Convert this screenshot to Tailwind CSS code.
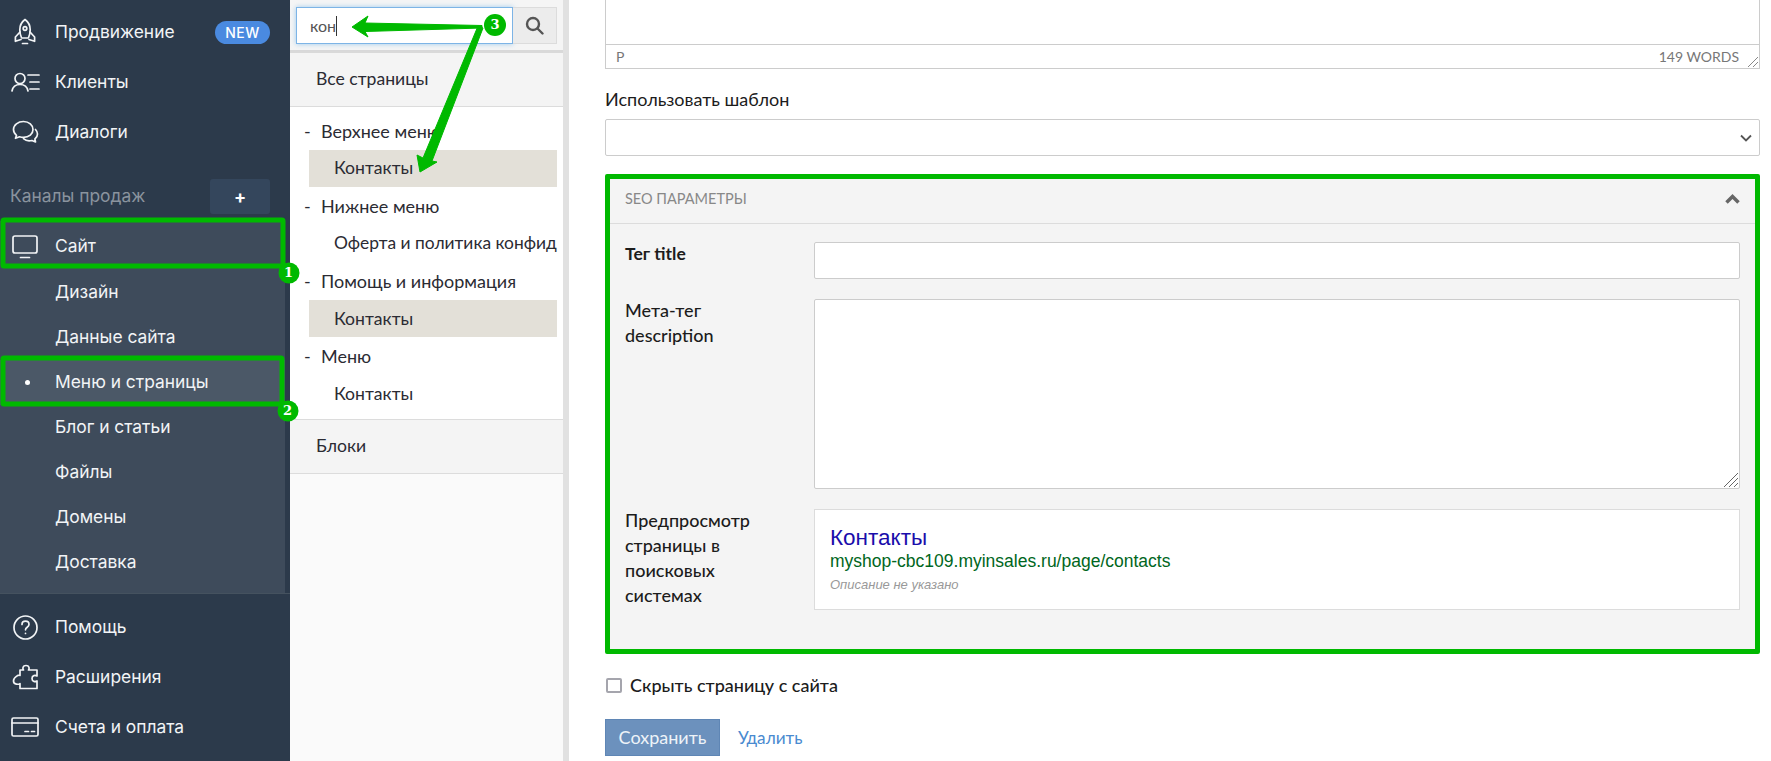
<!DOCTYPE html>
<html>

<head>
    <title>Меню и страницы</title>
    <script src="https://cdn.jsdelivr.net/npm/@tailwindcss/browser@4"></script>
</head>

<body class="bg-white overflow-hidden">
    <div class="relative flex w-[1771px] h-[761px] overflow-hidden">

        <!-- main sidebar -->
        <aside class="w-[290px] h-full shrink-0 flex flex-col bg-[#2c3a4b] text-[#f2f4f6] text-[17.400px] [font-family:Inter,sans-serif]">
            <div class="pt-[7px]">
                <a class="h-[50px] flex items-center">
                    <span class="w-[55px] flex justify-center pr-[5px]">
                        <svg class="w-[26px] h-[28px]" viewBox="0 0 26 28" fill="none" stroke="currentColor" stroke-width="1.7" stroke-linejoin="round" stroke-linecap="round">
                            <path d="M13 1.500c3.600 2.600 5.200 6.400 5.200 10.300 0 3-.8 6-1.800 8.200H9.600c-1-2.200-1.800-5.200-1.800-8.200 0-3.900 1.600-7.700 5.200-10.300z" />
                            <circle cx="13" cy="10.500" r="1.800" />
                            <path d="M8 14l-4.600 5v4.300l5.600-1.800M18 14l4.600 5v4.300l-5.600-1.800M10.500 25.500h5" />
                        </svg>
                    </span>
                    <span>Продвижение</span>
                    <span class="ml-auto mr-[20px] w-[55px] h-[23px] rounded-full bg-[#4a8ae0] text-white text-[14px] font-medium tracking-[0.5px] flex items-center justify-center">NEW</span>
                </a>
                <a class="h-[50px] flex items-center">
                    <span class="w-[55px] flex justify-center pr-[4px]">
                        <svg class="w-[30px] h-[20px]" viewBox="0 0 30 20" fill="none" stroke="currentColor" stroke-width="1.7" stroke-linecap="round">
                            <circle cx="9" cy="6.500" r="5" />
                            <path d="M1 19c.7-4 3.800-6.500 8-6.500s7.300 2.500 8 6.500M17 3h11M19 10h9M19 17h9" />
                        </svg>
                    </span>
                    <span>Клиенты</span>
                </a>
                <a class="h-[50px] flex items-center">
                    <span class="w-[55px] flex justify-center pr-[4px]">
                        <svg class="w-[27px] h-[25px]" viewBox="0 0 27 25" fill="none" stroke="currentColor" stroke-width="1.7" stroke-linejoin="round" stroke-linecap="round">
                            <path d="M11.500 1.500C6 1.500 1.500 5 1.500 9.500c0 2.300 1.100 4.300 3 5.800l-1 3 4-1.500c1.200.4 2.600.6 4 .6 5.500 0 9.500-3.400 9.500-7.900s-4-8-9.500-8z" />
                            <path d="M23.500 9.500c1.300 1.300 2 2.900 2 4.600 0 2-1 3.700-2.600 4.900l.6 3-3.500-1.500c-3 .8-6.300.2-8.500-1.800" />
                        </svg>
                    </span>
                    <span>Диалоги</span>
                </a>
            </div>

            <div class="h-[64px] pt-[15px] pl-[10px] pr-[20px] flex items-center justify-between text-[#8a939e]">
                <span>Каналы продаж</span>
                <span class="w-[60px] h-[35px] rounded-[3px] bg-[#34465c] text-white text-[18px] font-bold flex items-center justify-center">+</span>
            </div>

            <div class="h-[372px] mr-[5px] bg-[#3e4b5b] flex flex-col">
                <a class="h-[49px] pt-[2px] flex items-center">
                    <span class="w-[55px] flex justify-center pr-[5px]">
                        <svg class="w-[26px] h-[24px]" viewBox="0 0 26 24" fill="none" stroke="currentColor" stroke-width="1.700" stroke-linecap="round">
                            <rect x="1" y="1" width="24" height="17" rx="2" />
                            <path d="M8.500 22.500h9" />
                        </svg>
                    </span>
                    <span>Сайт</span>
                </a>
                <a class="h-[45px] pl-[55px] flex items-center">Дизайн</a>
                <a class="h-[45px] pl-[55px] flex items-center">Данные сайта</a>
                <a class="relative h-[45px] pl-[55px] flex items-center bg-[#4b5867]">
                    <span class="absolute left-[25px] top-[20px] w-[5px] h-[5px] rounded-full bg-white"></span>
                    Меню и страницы
                </a>
                <a class="h-[45px] pl-[55px] flex items-center">Блог и статьи</a>
                <a class="h-[45px] pl-[55px] flex items-center">Файлы</a>
                <a class="h-[45px] pl-[55px] flex items-center">Домены</a>
                <a class="h-[45px] pl-[55px] flex items-center">Доставка</a>
            </div>

            <div class="border-t border-[#45525f] pt-[8px]">
                <a class="h-[50px] flex items-center">
                    <span class="w-[55px] flex justify-center pr-[5px]">
                        <svg class="w-[25px] h-[25px]" viewBox="0 0 25 25" fill="none" stroke="currentColor" stroke-width="1.700" stroke-linecap="round" stroke-linejoin="round">
                            <circle cx="12.500" cy="12.500" r="11.500" />
                            <path d="M9 9.500c0-2 1.600-3.300 3.500-3.300s3.500 1.300 3.500 3.200c0 2.800-3.500 2.800-3.500 5.400" />
                            <path d="M12.500 18.300v.2" />
                        </svg>
                    </span>
                    <span>Помощь</span>
                </a>
                <a class="h-[50px] flex items-center">
                    <span class="w-[55px] flex justify-center pr-[5px]">
                        <svg class="w-[27px] h-[26px]" viewBox="0 0 27 26" fill="none" stroke="currentColor" stroke-width="1.700" stroke-linejoin="round">
                            <path d="M8 6h3.500c-1-1.200-1-4.500 2.500-4.500s3.500 3.300 2.500 4.500H25v6c-1.600-1-5-1-5 2.500s3.400 3.500 5 2.500v7.500H8v-5c-1 1-6.500 1.500-6.500-2.500S7 10.500 8 11.500V6z" />
                        </svg>
                    </span>
                    <span>Расширения</span>
                </a>
                <a class="h-[50px] flex items-center">
                    <span class="w-[55px] flex justify-center pr-[5px]">
                        <svg class="w-[28px] h-[20px]" viewBox="0 0 28 20" fill="none" stroke="currentColor" stroke-width="1.700" stroke-linecap="round">
                            <rect x="1" y="1" width="26" height="18" rx="1.500" />
                            <path d="M1 6h26M14 14.500h3.500M20.500 14.500h3" />
                        </svg>
                    </span>
                    <span>Счета и оплата</span>
                </a>
            </div>
        </aside>

        <!-- pages tree -->
        <section class="w-[273px] h-full shrink-0 bg-[#fafafa] text-[#2b2b33] text-[17.600px] [font-family:Lato,sans-serif]">
            <div class="h-[53px] bg-[#f5f5f5] border-b-[3px] border-[#d9d9d9] flex items-start pt-[7px] pl-[6px] pr-[6px]">
                <div class="w-[217px] h-[37px] bg-white border border-[#7db4e6] shadow-[0_0_5px_rgba(102,175,233,0.6)] pl-[13px] flex items-center text-[16px] text-[#555]">
                    кон<span class="w-px h-[20px] bg-[#333]"></span>
                </div>
                <div class="flex-1 h-[37px] bg-[#ececec] border border-l-0 border-[#dcdcdc] flex items-center justify-center">
                    <svg class="w-[19px] h-[19px]" viewBox="0 0 19 19" fill="none" stroke="#555" stroke-width="2.400" stroke-linecap="round">
                        <circle cx="8" cy="8" r="6" />
                        <path d="M12.500 12.500l5 5" />
                    </svg>
                </div>
            </div>
            <div class="h-[54px] bg-[#f4f4f4] border-b border-[#dcdcdc] pl-[26px] flex items-center">Все страницы</div>
            <div class="bg-white h-[312px] pt-[5px] pl-[14px] pr-[6px] overflow-hidden">
                <div class="h-[38px] text-[18px] flex items-center"><span class="w-[17px]">-</span>Верхнее меню</div>
                <div class="h-[37px] ml-[5px] bg-[#e3e0d8] pl-[25px] flex items-center">Контакты</div>
                <div class="h-[38px] text-[18px] flex items-center"><span class="w-[17px]">-</span>Нижнее меню</div>
                <div class="h-[37px] ml-[5px] pl-[25px] text-[17.400px] flex items-center whitespace-nowrap">Оферта и политика конфид</div>
                <div class="h-[38px] text-[18px] flex items-center"><span class="w-[17px]">-</span>Помощь и информация</div>
                <div class="h-[37px] ml-[5px] bg-[#e3e0d8] pl-[25px] pt-[2px] flex items-center">Контакты</div>
                <div class="h-[38px] text-[18px] flex items-center"><span class="w-[17px]">-</span>Меню</div>
                <div class="h-[37px] ml-[5px] pl-[25px] pt-[2px] flex items-center">Контакты</div>
            </div>
            <div class="h-[55px] bg-[#f4f4f4] border-y border-[#dcdcdc] pl-[26px] flex items-center">Блоки</div>
        </section>

        <!-- scrollbar -->
        <div class="w-[6px] h-full shrink-0 bg-[#e1e1e1]"></div>

        <!-- page form -->
        <main class="flex-1 pl-[36px] pr-[11px] text-[18px] text-[#1c1c1c] [font-family:Lato,sans-serif]">
            <div class="h-[69px] border-x border-b border-[#cccccc] flex flex-col">
                <div class="flex-1"></div>
                <div class="relative h-[24px] border-t border-[#cccccc] pl-[10px] pr-[20px] flex items-center justify-between text-[14px] text-[#777]">
                    <span>P</span>
                    <span>149 WORDS</span>
                    <svg class="absolute right-0 bottom-0 w-[12px] h-[12px]" viewBox="0 0 12 12" fill="none" stroke="#888" stroke-width="1">
                        <path d="M1 11L11 1M6 11l5-5" />
                    </svg>
                </div>
            </div>

            <label class="block mt-[18px] h-[24px] leading-[24px]">Использовать шаблон</label>
            <div class="mt-[8px] h-[37px] border border-[#cccccc] rounded-[2px] flex items-center justify-end pr-[7px]">
                <svg class="w-[12px] h-[8px]" viewBox="0 0 12 8" fill="none" stroke="#555" stroke-width="1.800">
                    <path d="M1 1.500l5 5 5-5" />
                </svg>
            </div>

            <div class="mt-[18px] h-[480px] border-[5px] border-[#00b900] rounded-[2px] bg-[#f4f4f4]">
                <div class="h-[45px] pb-[4px] border-b border-[#dcdcdc] pl-[15px] pr-[15px] flex items-center justify-between text-[14.500px] text-[#888]">
                    <span>SEO ПАРАМЕТРЫ</span>
                    <svg class="w-[15px] h-[10px]" viewBox="0 0 15 10" fill="none" stroke="#666" stroke-width="3.500">
                        <path d="M1.500 8.500l6-6 6 6" />
                    </svg>
                </div>
                <div class="pt-[18px] pl-[15px] pr-[15px] flex flex-col gap-[20px]">
                    <div class="flex">
                        <label class="w-[189px] shrink-0 text-[17.500px] font-bold mt-[-1px] leading-[25px]">Тег title</label>
                        <div class="flex-1 h-[37px] bg-white border border-[#cccccc] rounded-[2px]"></div>
                    </div>
                    <div class="flex">
                        <label class="w-[189px] shrink-0 font-medium leading-[25px] mt-[-1px]">Мета-тег<br>description</label>
                        <div class="relative flex-1 h-[190px] bg-white border border-[#cccccc] rounded-[2px]">
                            <svg class="absolute right-0 bottom-0 w-[16px] h-[16px]" viewBox="0 0 16 16" fill="none" stroke="#666" stroke-width="1">
                                <path d="M1 15L15 1M6 15l9-9M11 15l4-4" />
                            </svg>
                        </div>
                    </div>
                    <div class="flex">
                        <label class="w-[189px] shrink-0 font-medium leading-[25px] mt-[-1px]">Предпросмотр<br>страницы в<br>поисковых<br>системах</label>
                        <div class="flex-1 h-[101px] bg-white border border-[#dcdcdc] pl-[15px] pt-[14px] [font-family:'Liberation_Sans',Arial,sans-serif]">
                            <div class="text-[22.500px] leading-[27px] text-[#1a0dab]">Контакты</div>
                            <div class="text-[17.500px] leading-[20px] text-[#006621]">myshop-cbc109.myinsales.ru/page/contacts</div>
                            <div class="mt-[6px] text-[13px] leading-[16px] italic text-[#999]">Описание не указано</div>
                        </div>
                    </div>
                </div>
            </div>

            <label class="mt-[23px] flex items-center h-[16px]">
                <span class="w-[16px] h-[15px] ml-px bg-white border-2 border-[#a5a5ad] rounded-[2px]"></span>
                <span class="ml-[8px] font-medium">Скрыть страницу с сайта</span>
            </label>

            <div class="mt-[26px] flex items-center">
                <button class="w-[115px] h-[37px] bg-[#6c91bd] border border-[#5f86b5] text-[#eef3f8]">Сохранить</button>
                <a class="ml-[18px] text-[17.200px] text-[#4a8ad0]">Удалить</a>
            </div>
        </main>

        <!-- annotations drawn over the screenshot -->
        <svg class="absolute left-0 top-0 w-[1771px] h-[761px] pointer-events-none" viewBox="0 0 1771 761" fill="none">
            <rect x="3" y="220" width="280" height="46" rx="1" stroke="#00b900" stroke-width="5" />
            <rect x="3" y="358" width="279" height="46" rx="1" stroke="#00b900" stroke-width="5" />
            <path d="M352 27L368 16L365 23L482 25.500V28L365 31.500L368 37Z" fill="#00b900" stroke="#00b900" stroke-linejoin="round" />
            <path d="M420 172L417 155L423 158L478 26L483 28L432 161L437 162Z" fill="#00b900" stroke="#00b900" stroke-linejoin="round" />
            <circle cx="289" cy="273" r="10.500" fill="#00b900" />
            <circle cx="288" cy="411" r="10.500" fill="#00b900" />
            <circle cx="495" cy="25" r="11" fill="#00b900" />
        </svg>
        <div class="absolute left-[278px] top-[262px] w-[21px] h-[21px] flex items-center justify-center text-[13px] font-bold text-white [font-family:'DejaVu_Serif',serif]">1</div>
        <div class="absolute left-[277px] top-[400px] w-[21px] h-[21px] flex items-center justify-center text-[13px] font-bold text-white [font-family:'DejaVu_Serif',serif]">2</div>
        <div class="absolute left-[484px] top-[14px] w-[22px] h-[22px] flex items-center justify-center text-[13px] font-bold text-white [font-family:'DejaVu_Serif',serif]">3</div>
    </div>
</body>

</html>
